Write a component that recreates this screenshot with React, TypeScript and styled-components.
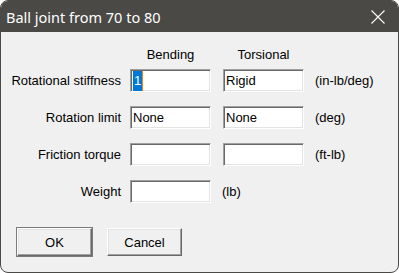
import React from 'react';
import styled, { createGlobalStyle } from 'styled-components';

const GlobalStyle = createGlobalStyle`
  html, body {
    margin: 0;
    padding: 0;
    background: #ffffff;
  }
`;

const Window = styled.div`
  width: 399px;
  height: 273px;
  box-sizing: border-box;
  border: 1px solid #4a4946;
  border-radius: 8px;
  overflow: hidden;
  background: #f0f0f0;
  display: flex;
  flex-direction: column;
`;

const TitleBar = styled.div`
  height: 31px;
  flex: none;
  background: #4a4946;
  display: flex;
  align-items: center;
  justify-content: space-between;
  padding: 0 13px 0 5px;
  color: #ffffff;
  font-family: "Noto Sans", "Open Sans", sans-serif;
  font-size: 14.5px;
`;

const CloseIcon = () => (
  <svg width="14" height="14" viewBox="0 0 14 14">
    <path d="M0.5 0.5 L13.5 13.5 M13.5 0.5 L0.5 13.5" stroke="#ffffff" strokeWidth="1.1" fill="none" />
  </svg>
);

const Body = styled.div`
  flex: 1;
  padding: 16px 0 0 8px;
  font-family: "Liberation Sans", Arial, sans-serif;
  font-size: 13px;
  color: #000000;
`;

const columns = '109px 81px 81px';

const FieldGrid = styled.div`
  display: grid;
  grid-template-columns: ${columns} auto;
  column-gap: 12px;
  row-gap: 14px;
  grid-auto-rows: 23px;
  align-items: center;
`;

const HeaderRow = styled.div`
  display: grid;
  grid-template-columns: ${columns};
  column-gap: 12px;
  height: 13px;
  margin-bottom: 8px;
  line-height: 13px;
`;

const ColHead = styled.div`
  text-align: center;
`;

const Label = styled.div`
  text-align: right;
  white-space: nowrap;
  margin-right: -3px;
`;

const Unit = styled.div`
  white-space: nowrap;
  margin-left: -1px;
`;

const Field = styled.div`
  box-sizing: border-box;
  height: 23px;
  background: #ffffff;
  border-top: 1px solid #a0a0a0;
  border-left: 1px solid #a0a0a0;
  border-right: 1px solid #ffffff;
  border-bottom: 1px solid #ffffff;
  box-shadow: inset 1px 1px 0 #696969, inset -1px -1px 0 #e3e3e3;
  padding: 2px 2px;
  display: flex;
  align-items: center;
  white-space: nowrap;
`;

const Selected = styled.span`
  background: #0078d7;
  color: #ffffff;
  padding: 2px 1px 3px 1px;
  border-right: 1px solid #ff7f00;
`;

const ButtonRow = styled.div`
  display: flex;
  gap: 15px;
  margin-top: 25px;
  padding-left: 8px;
`;

const Button = styled.button<{ $default?: boolean }>`
  width: 75px;
  height: 28px;
  box-sizing: border-box;
  background: #f0f0f0;
  font-family: "Liberation Sans", Arial, sans-serif;
  font-size: 13px;
  color: #000000;
  padding: 0;
  border-top: 1px solid #ffffff;
  border-left: 1px solid #ffffff;
  border-right: 1px solid #696969;
  border-bottom: 1px solid #696969;
  box-shadow: inset -1px -1px 0 #a0a0a0, inset 1px 1px 0 #e3e3e3;
  outline: ${p => (p.$default ? '1px solid #7a7a7a' : 'none')};
  outline-offset: 0;
`;

const rows = [
  { label: 'Rotational stiffness', bending: '1', torsional: 'Rigid', unit: '(in-lb/deg)' },
  { label: 'Rotation limit', bending: 'None', torsional: 'None', unit: '(deg)' },
  { label: 'Friction torque', bending: '', torsional: '', unit: '(ft-lb)' },
];

export default function App() {
  return (
    <>
      <GlobalStyle />
      <Window>
        <TitleBar>
          <span>Ball joint from 70 to 80</span>
          <CloseIcon />
        </TitleBar>
        <Body>
          <HeaderRow>
            <div />
            <ColHead>Bending</ColHead>
            <ColHead>Torsional</ColHead>
          </HeaderRow>
          <FieldGrid>
            {rows.map((r, i) => (
              <React.Fragment key={r.label}>
                <Label>{r.label}</Label>
                <Field>{i === 0 ? <Selected>{r.bending}</Selected> : r.bending}</Field>
                <Field>{r.torsional}</Field>
                <Unit>{r.unit}</Unit>
              </React.Fragment>
            ))}
            <Label>Weight</Label>
            <Field />
            <Unit>(lb)</Unit>
          </FieldGrid>
          <ButtonRow>
            <Button $default>OK</Button>
            <Button>Cancel</Button>
          </ButtonRow>
        </Body>
      </Window>
    </>
  );
}
